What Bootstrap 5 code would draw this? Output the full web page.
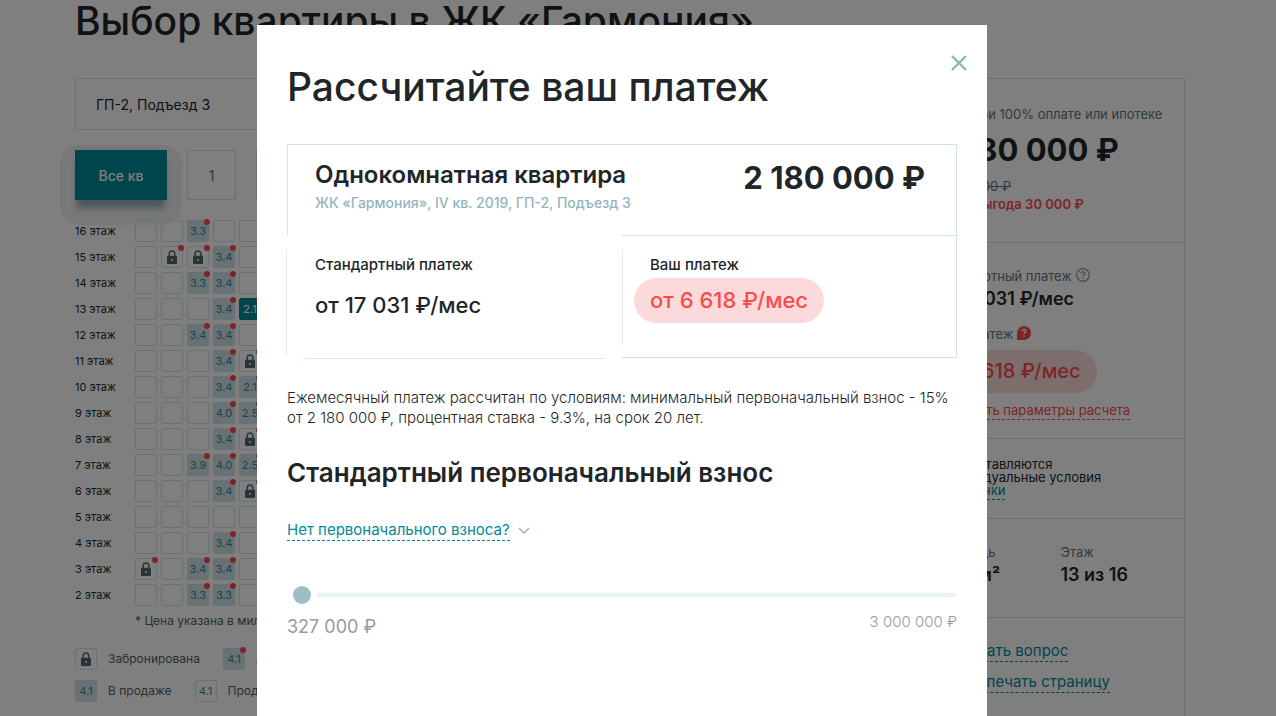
<!DOCTYPE html>
<html lang="ru">
<head>
<meta charset="utf-8">
<meta name="viewport" content="width=device-width, initial-scale=1">
<title>Выбор квартиры в ЖК «Гармония»</title>
<link href="https://cdn.jsdelivr.net/npm/bootstrap@5.3.0/dist/css/bootstrap.min.css" rel="stylesheet">
<style>
  :root { --ink:#1e2629; --teal:#008a99; --line:#d1e3e8; --muted:#9fbdc4; --slate:#5e7680; --red:#fa4b4b; --pink:#fcdadb; }
  body { font-family: Inter, "Liberation Sans", sans-serif; color: var(--ink); font-size: 14px; overflow: hidden; height: 100vh; }
  .page-area { padding-right: 16px; isolation: isolate; }
  .page-wrap { max-width: 1110px; margin: 0 auto; }
  .display-title { font-size: 39px; line-height: 42px; font-weight: 500; white-space: nowrap; }
  .chooser { padding-top: 36px; }
  .entrance { height: 52px; border: 1px solid var(--line); border-radius: 0; padding: 0 20px; font-size: 14px; color: var(--ink); background-image: none; }
  .rooms { gap: 20px; margin: 20px 0 18px; }
  .room-btn { height: 50px; min-width: 49px; border-radius: 0; border: 1px solid var(--line); color: var(--slate); font-size: 14px; }
  .room-btn.current { position: relative; width: 92px; background: var(--teal); border-color: var(--teal); color: #fff; font-weight: 500; box-shadow: 0 10px 6px -2px rgba(50,90,100,.45); }
  .room-btn.current::before { content: ""; position: absolute; z-index: -1; inset: -6px -16px -26px; border-radius: 20px; background: rgba(120,130,160,.12); }
  .floors th { width: 60px; font-size: 11px; font-weight: 400; padding: 0; }
  .floors td { width: 26px; height: 26px; padding: 0; }
  .flat { position: relative; display: flex; align-items: center; justify-content: center; width: 22px; height: 22px; border: 1px solid var(--line); border-radius: 2px; font-size: 11px; color: #3b8795; }
  .flat.sale { background: var(--line); }
  .flat.chosen { background: var(--teal); border-color: var(--teal); color: #fff; }
  .flat.promo::after { content: ""; position: absolute; top: -2px; right: -2px; width: 6px; height: 6px; border-radius: 50%; background: var(--red); }
  .note { font-size: 12px; line-height: 18px; padding-left: 60px; color: #555f63; margin: 4px 0 18px; }
  .legend { font-size: 12px; line-height: 22px; color: #555f63; white-space: nowrap; margin-bottom: 10px; }
  .legend b { font-weight: 400; margin: 0 23px 0 11px; }
  .side { width: 350px; border: 1px solid var(--line); }
  .side > section { padding: 0 20px 0 101px; border-bottom: 1px solid var(--line); white-space: nowrap; }
  .side .s-price { height: 164px; padding-top: 26px; }
  .side .s-pay { height: 196px; padding-top: 24px; }
  .side .s-terms { height: 80px; padding-top: 19px; line-height: 13px; font-size: 13px; }
  .side .s-area { height: 99px; padding-top: 24px; padding-right: 0; }
  .s-area > div { width: 128px; }
  .side .s-links { padding-top: 21px; padding-bottom: 40px; font-size: 15px; line-height: 23px; border-bottom: 0; }
  .cap { font-size: 13px; line-height: 18px; color: var(--slate); }
  .cap svg { margin-top: -5px; }
  .fact { font-size: 18px; line-height: 28px; }
  .total { font-size: 31px; line-height: 54px; font-weight: 700; }
  .alert-tone { color: var(--red); }
  .dashed { text-decoration: none; border-bottom: 1px dashed currentColor; color: var(--teal); padding-bottom: 1px; }
  .dashed.alert-tone { color: var(--red); }
  .pill { display: inline-block; background: var(--pink); color: var(--red); border-radius: 23px; padding: 0 16px; margin: 3px 0 0 -16px; line-height: 45px; font-size: 22px; font-weight: 500; white-space: nowrap; }
  .side .pill { line-height: 43px; font-size: 20px; margin-top: 7px; margin-bottom: 8px; }
  .veil { padding-right: 32px; background: rgba(0,0,0,.5); overflow: hidden; }
  .veil .modal-dialog { max-width: 730px; margin: 25px auto 0; }
  .veil .modal-content { min-height: calc(100vh - 25px); border: 0; border-radius: 0; padding: 41px 30px 0; color: var(--ink); }
  .closer { position: absolute; top: 30px; right: 20px; width: 16px; height: 16px; padding: 0; border: 0; background: none; }
  .closer svg { display: block; }
  .offer { border: 1px solid var(--line); border-bottom: 0; height: 91px; padding: 16px 31px 0 27px; margin-top: 36px; }
  .offer h3 { font-size: 24px; line-height: 28px; font-weight: 600; margin: 0; }
  .offer p { font-size: 14px; line-height: 28px; color: #93b4bd; font-weight: 500; margin: 0; }
  .offer strong { font-size: 31px; line-height: 34px; font-weight: 700; }
  .half { position: relative; height: 123px; padding: 20px 0 0 28px; font-weight: 500; }
  .half::before { content: ""; position: absolute; left: -1px; top: 15px; bottom: 2px; border-left: 1px solid #e6e8e9; }
  .half.std::after { content: ""; position: absolute; left: 14px; right: 17px; bottom: -6px; height: 6px; border-top: 1px solid #e6e8e9; border-top-left-radius: 6px; }
  .half.own { border: 1px solid var(--line); border-left: 0; padding-top: 19px; }
  .half.own::before { left: 0; top: 14px; bottom: 12px; }
  .half .hd { font-size: 15px; line-height: 20px; }
  .sum { font-size: 22px; line-height: 28px; margin-top: 16px; }
  .terms { font-size: 15px; line-height: 20px; font-weight: 300; margin: 30px 0 30px; }
  .sub { font-size: 26px; line-height: 30px; font-weight: 600; }
  .nofee { font-size: 15px; line-height: 22px; margin: 31px 0 45px; }
  .rng { -webkit-appearance: none; appearance: none; display: block; width: calc(100% - 6px); height: 18px; margin: 0 0 10px 6px; background: none; }
  .rng::-webkit-slider-runnable-track { height: 4px; background: #eaf4f6; border-radius: 2px; }
  .rng::-webkit-slider-thumb { -webkit-appearance: none; width: 18px; height: 18px; margin-top: -7px; border-radius: 50%; background: #9fbdc4; box-shadow: 0 0 0 6px #fff; }
  .vals { color: #999; }
  .vals .lo { font-size: 18px; line-height: 26px; }
  .vals .hi { font-size: 15px; line-height: 16px; font-weight: 300; }
</style>
</head>
<body>
<svg width="0" height="0" class="position-absolute" aria-hidden="true">
  <symbol id="lock" viewBox="0 0 10 14"><path d="M2.2 6V3.8a2.8 2.8 0 0 1 5.6 0V6" fill="none" stroke="#536872" stroke-width="1.5"/><path d="M1 5.8h8a1 1 0 0 1 1 1V13a1 1 0 0 1-1 1H1a1 1 0 0 1-1-1V6.800a1 1 0 0 1 1-1z" fill="#536872"/><circle cx="5" cy="10" r="1" fill="#fff"/></symbol>
</svg>

<div class="page-area">
<div class="page-wrap">
  <h1 class="display-title mb-0">Выбор квартиры в ЖК «Гармония»</h1>
  <div class="d-flex justify-content-between chooser">
    <main class="flex-grow-1 me-5">
      <select class="form-select entrance" aria-label="Подъезд"><option>ГП-2, Подъезд 3</option></select>
      <div class="d-flex rooms">
        <button type="button" class="btn room-btn current">Все кв</button>
        <button type="button" class="btn room-btn">1</button>
        <button type="button" class="btn room-btn">2</button>
      </div>
      <table class="floors"><tbody id="floors"></tbody></table>
      <div class="note">* Цена указана в миллионах рублей</div>
      <div class="legend d-flex">
        <span class="flat"><svg width="10" height="14"><use href="#lock"/></svg></span><b>Забронирована</b>
        <span class="flat sale promo">4.1</span><b>Акция</b>
      </div>
      <div class="legend d-flex">
        <span class="flat sale">4.1</span><b>В продаже</b>
        <span class="flat">4.1</span><b>Продана</b>
      </div>
    </main>
    <aside class="side flex-shrink-0">
      <section class="s-price">
        <div class="cap">Цена при 100% оплате или ипотеке</div>
        <div class="total">2 180 000 ₽</div>
        <div class="cap"><del>2 210 000 ₽</del></div>
        <div class="cap alert-tone fw-semibold">Ваша выгода 30 000 ₽</div>
      </section>
      <section class="s-pay">
        <div class="cap">Стандартный платеж
          <svg width="14" height="14" viewBox="0 0 14 14"><circle cx="7" cy="7" r="6.300" fill="none" stroke="#7b99a3" stroke-width="1.200"/><path d="M5.300 5.500a1.700 1.700 0 1 1 2.600 1.400Q7 7.500 7 8.300M7 9.600v1.200" fill="none" stroke="#7b99a3" stroke-width="1.300"/></svg></div>
        <div class="fact fw-semibold">от 17 031 ₽/мес</div>
        <div class="cap mt-2 pt-1">Ваш платеж
          <svg width="14" height="14" viewBox="0 0 14 14"><path d="M7 0a7 7 0 1 1 0 14H0V7a7 7 0 0 1 7-7z" fill="#fa4b4b"/><path d="M5.300 5.300a1.700 1.700 0 1 1 2.600 1.400Q7 7.300 7 8.100M7 9.400v1.300" fill="none" stroke="#fff" stroke-width="1.500"/></svg></div>
        <div class="pill">от 6 618 ₽/мес</div>
        <div class="cap"><a href="#" class="dashed alert-tone">Изменить параметры расчета</a></div>
      </section>
      <section class="s-terms">Предоставляются<br>индивидуальные условия<br><a href="#" class="dashed">рассрочки</a></section>
      <section class="s-area d-flex">
        <div><div class="cap">Площадь</div><div class="fact fw-semibold">41,2 м²</div></div>
        <div><div class="cap">Этаж</div><div class="fact fw-semibold">13 из 16</div></div>
      </section>
      <section class="s-links">
        <div class="mb-2"><svg class="me-2" width="15" height="12" viewBox="0 0 15 12"><path d="M1 1h13v8H6l-3 2V9H1z" fill="none" stroke="#008a99"/></svg><a href="#" class="dashed">Задать вопрос</a></div>
        <div><svg class="me-2" width="15" height="12" viewBox="0 0 15 12"><path d="M4 4V1h7v3M4 9H1V4h13v5h-3M4 7h7v4H4z" fill="none" stroke="#008a99"/></svg><a href="#" class="dashed">Распечать страницу</a></div>
      </section>
    </aside>
  </div>
</div>
</div>

<div class="modal d-block veil" tabindex="-1" role="dialog" aria-modal="true" aria-labelledby="dlg">
  <div class="modal-dialog">
    <div class="modal-content">
      <button type="button" class="closer" aria-label="Закрыть"><svg width="16" height="16" viewBox="0 0 16 16"><path d="M1 1l14 14M15 1L1 15" stroke="#8fb2bd" stroke-width="2.400"/></svg></button>
      <h2 class="display-title mb-0" id="dlg">Рассчитайте ваш платеж</h2>
      <div class="offer d-flex justify-content-between">
        <div><h3>Однокомнатная квартира</h3><p>ЖК «Гармония», IV кв. 2019, ГП-2, Подъезд 3</p></div>
        <strong>2 180 000 ₽</strong>
      </div>
      <div class="row g-0">
        <div class="col-6"><div class="half std"><div class="hd">Стандартный платеж</div><div class="sum">от 17 031 ₽/мес</div></div></div>
        <div class="col-6"><div class="half own"><div class="hd">Ваш платеж</div><div class="pill">от 6 618 ₽/мес</div></div></div>
      </div>
      <p class="terms">Ежемесячный платеж рассчитан по условиям: минимальный первоначальный взнос - 15% от&nbsp;2&nbsp;180&nbsp;000&nbsp;₽, процентная ставка - 9.3%, на срок 20 лет.</p>
      <h3 class="sub mb-0" id="fee">Стандартный первоначальный взнос</h3>
      <div class="nofee"><a href="#" class="dashed">Нет первоначального взноса?</a><svg class="ms-2" width="12" height="7" viewBox="0 0 12 7"><path d="M1 1l5 5 5-5" fill="none" stroke="#8fb2bd" stroke-width="1.300"/></svg></div>
      <input type="range" class="rng" min="327000" max="3000000" value="327000" aria-labelledby="fee">
      <div class="vals d-flex justify-content-between"><span class="lo">327 000 ₽</span><span class="hi">3 000 000 ₽</span></div>
    </div>
  </div>
</div>

<script src="https://cdn.jsdelivr.net/npm/bootstrap@5.3.0/dist/js/bootstrap.bundle.min.js"></script>
<script>
  // Flats per floor: "-" is sold, "L" is booked, "*" marks a promotion, "!" the chosen flat.
  const floors = {
    16: '- - 3.3* - -', 15: '- L* L* 3.4* -', 14: '- - 3.3* 3.4* -', 13: '- - - 3.4* 2.1*!',
    12: '- - 3.4* 3.4* -', 11: '- - - 3.4* L*', 10: '- - - 3.4* 2.1*', 9: '- - - 4.0* 2.5*',
    8: '- - - 3.4* L*', 7: '- - 3.9* 4.0* 2.5*', 6: '- - - 3.4* L*', 5: '- - - - -',
    4: '- - - 3.4* -', 3: 'L* - 3.4* 3.4* -', 2: '- - 3.3* 3.3* -'
  };
  const cell = c => {
    const text = c.replace(/[-L*!]/g, '');
    const cls = ['flat', text && 'sale', c.includes('*') && 'promo', c.includes('!') && 'chosen'].filter(Boolean).join(' ');
    const body = c.includes('L') ? '<svg width="10" height="14"><use href="#lock"/></svg>' : text;
    return `<td><span class="${cls}">${body}</span></td>`;
  };
  document.getElementById('floors').innerHTML = Object.keys(floors).reverse()
    .map(n => `<tr><th scope="row">${n} этаж</th>${floors[n].split(' ').map(cell).join('')}</tr>`).join('');
</script>
</body>
</html>
